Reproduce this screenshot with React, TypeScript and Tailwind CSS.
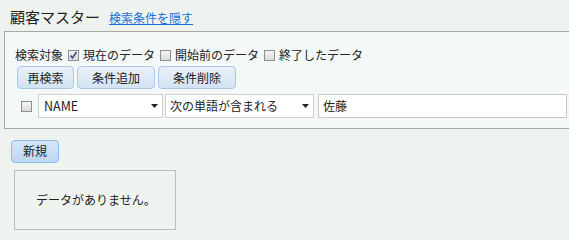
import React from 'react';

const font = { fontFamily: '"Noto Sans CJK JP", "Liberation Sans", sans-serif' };

const Check = ({ checked }: { checked?: boolean }) => (
  <span className="inline-flex h-[11px] w-[11px] items-center justify-center border border-[#8f8f8f] bg-gradient-to-b from-[#f4f4f4] to-[#dcdcdc]">
    {checked && (
      <svg width="9" height="9" viewBox="0 0 9 9">
        <path d="M1.5 4.5 L3.5 7 L7.5 1" fill="none" stroke="#3c4f86" strokeWidth="1.6" />
      </svg>
    )}
  </span>
);

const Btn = ({ label, w }: { label: string; w: string }) => (
  <button
    className={`h-[23px] ${w} rounded-[4px] border border-[#a9c8e8] bg-gradient-to-b from-[#e8f1fa] to-[#d3e3f3] text-[12px] text-[#222]`}
  >
    {label}
  </button>
);

const Arrow = () => (
  <svg width="7" height="4" viewBox="0 0 7 4">
    <path d="M0 0 H7 L3.5 4 Z" fill="#222" />
  </svg>
);

export default function App() {
  return (
    <div className="h-[240px] w-[569px] overflow-hidden bg-[#eef3f0] text-[#222]" style={font}>
      <div className="flex items-end pl-[10px] pt-[7px]">
        <span className="text-[15px] leading-[20px]">顧客マスター</span>
        <a className="ml-[9px] text-[12px] leading-[18px] text-[#1a6fd6] underline">検索条件を隠す</a>
      </div>

      <div className="ml-[4px] mt-[4px] h-[98px] w-[570px] border border-[#a8aaa8] bg-[#f4f8f9] pl-[10px] pt-[14px]">
        <div className="flex h-[18px] items-center text-[12px]">
          <span>検索対象</span>
          <span className="ml-[5px] mr-[4px] flex"><Check checked /></span>
          <span>現在のデータ</span>
          <span className="ml-[5px] mr-[4px] flex"><Check /></span>
          <span>開始前のデータ</span>
          <span className="ml-[5px] mr-[4px] flex"><Check /></span>
          <span>終了したデータ</span>
        </div>
        <div className="mt-[2px] flex gap-[3px] pl-[2px]">
          <Btn label="再検索" w="w-[57px]" />
          <Btn label="条件追加" w="w-[78px]" />
          <Btn label="条件削除" w="w-[78px]" />
        </div>
        <div className="mt-[5px] flex items-center text-[12px]">
          <span className="ml-[6px] mr-[6px] flex"><Check /></span>
          <div className="flex h-[24px] w-[125px] items-center justify-between border border-[#d0d0d0] bg-white pl-[5px] pr-[4px]">
            <span className="text-[12.5px]">NAME</span>
            <Arrow />
          </div>
          <div className="ml-[2px] flex h-[24px] w-[149px] items-center justify-between border border-[#d0d0d0] bg-white pl-[4px] pr-[4px]">
            <span>次の単語が含まれる</span>
            <Arrow />
          </div>
          <div className="ml-[4px] flex h-[24px] w-[249px] items-center border border-[#c8c8c8] bg-white pl-[4px]">
            <span>佐藤</span>
          </div>
        </div>
      </div>

      <div className="pl-[11px] pt-[8px]">
        <button className="h-[23px] w-[48px] rounded-[4px] border border-[#8fbbe8] bg-gradient-to-b from-[#d6e7f8] to-[#bcd7f3] text-[12px] text-[#222]">
          新規
        </button>
      </div>

      <div className="ml-[14px] mt-[7px] flex h-[60px] w-[162px] items-center border border-[#bdbdbd] pl-[21px] text-[12px]">
        データがありません。
      </div>
    </div>
  );
}
